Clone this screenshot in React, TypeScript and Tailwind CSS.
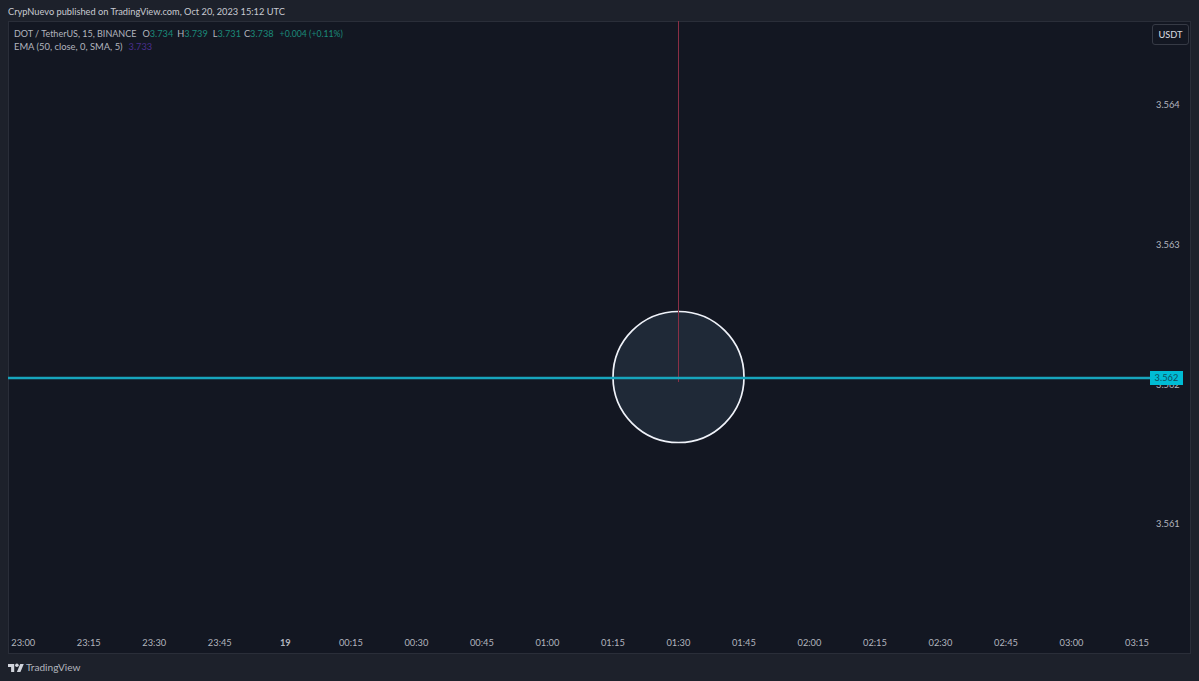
const times = ["23:00", "23:15", "23:30", "23:45", "19", "00:15", "00:30", "00:45", "01:00", "01:15", "01:30", "01:45", "02:00", "02:15", "02:30", "02:45", "03:00", "03:15"];

const prices = [
  { label: "3.564", top: 76 },
  { label: "3.563", top: 216 },
  { label: "3.562", top: 356 },
  { label: "3.561", top: 495 },
];

function Logo() {
  return (
    <svg viewBox="0 6 36 20" className="h-[10px] w-[16px] fill-[#d1d4dc]">
      <path d="M14 25H7V14H0V7h14v18zM28 25h-8l7.5-18h8L28 25z" />
      <circle cx="20" cy="10" r="4" />
    </svg>
  );
}

export default function App() {
  return (
    <div className="flex h-[681px] w-[1199px] flex-col overflow-hidden bg-[#1d212b] font-['Lato',sans-serif] text-[9.3px] text-[#b2b5be]">
      <div className="flex h-[24px] items-center pl-2 text-[9.25px] leading-none text-[#c8cad1]">
        CrypNuevo published on TradingView.com, Oct 20, 2023 15:12 UTC
      </div>

      <div className="relative mx-2 -mt-[3px] flex min-h-0 flex-1 flex-col border border-[#2a2e39] bg-[#131722]">
        <div className="flex-1 pl-[5px] pt-[5px] text-[9.2px] leading-[13px]">
          <div className="flex">
            <span className="text-[9px]">DOT / TetherUS, 15, BINANCE</span>
            <span className="ml-[6px]">O<span className="text-[#1b8a7a]">3.734</span></span>
            <span className="ml-[4px]">H<span className="text-[#1b8a7a]">3.739</span></span>
            <span className="ml-[5px]">L<span className="text-[#1b8a7a]">3.731</span></span>
            <span className="ml-[3px]">C<span className="text-[#1b8a7a]">3.738</span></span>
            <span className="ml-[6px] text-[8.7px] text-[#1b8a7a]">+0.004 (+0.11%)</span>
          </div>
          <div className="flex">
            <span className="text-[9.4px]">EMA (50, close, 0, SMA, 5)</span>
            <span className="ml-[6px] text-[#4a2f8f]">3.733</span>
          </div>
        </div>

        <div className="ml-[-18.5px] flex h-[20px] items-center leading-none">
          {times.map((t) => (
            <span key={t} className={t === "19" ? "w-[65.53px] shrink-0 text-center font-bold" : "w-[65.53px] shrink-0 text-center"}>
              {t}
            </span>
          ))}
        </div>

        {/* chart canvas */}
        {prices.map((p) => (
          <span key={p.label} className="absolute left-[1147px] leading-[14px]" style={{ top: p.top }}>
            {p.label}
          </span>
        ))}
        <svg className="absolute left-[-1px] top-[-1px] h-[634px] w-[1182px]" viewBox="0 0 1182 634">
          <circle cx="670.5" cy="356" r="65.5" fill="#1f2937" stroke="#f0f3fa" strokeWidth="1.7" />
          <line x1="670.5" y1="0" x2="670.5" y2="361" stroke="#8a2f45" strokeWidth="1" />
          <line x1="0" y1="357" x2="1142" y2="357" stroke="#17a5bd" strokeWidth="2.6" />
        </svg>
        <span className="absolute left-[1141px] top-[349px] flex h-[14px] w-[33px] items-center justify-center bg-[#00bcd4] leading-none text-[#0f4f5f]">
          3.562
        </span>
        <span className="absolute right-[1px] top-[2px] flex h-[21px] w-[37px] items-center justify-center rounded-[3px] border border-[#363a45] bg-[#131722] font-medium leading-none text-[#d1d4dc]">
          USDT
        </span>
      </div>

      <div className="flex h-[27px] items-center gap-[2px] pl-2 text-[10.1px] leading-none text-[#b2b5be]">
        <Logo />
        <span>TradingView</span>
      </div>
    </div>
  );
}
